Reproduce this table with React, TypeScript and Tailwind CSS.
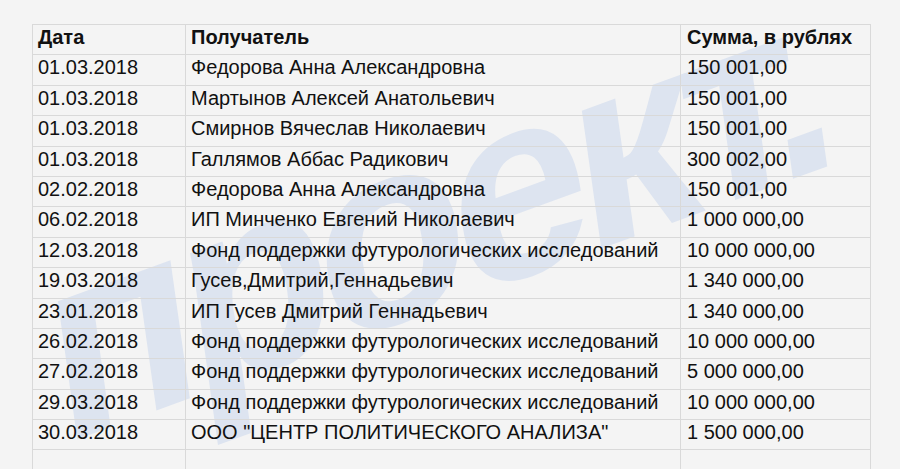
import React from "react";

const rows: [string, string, string][] = [
  ["01.03.2018", "Федорова Анна Александровна", "150 001,00"],
  ["01.03.2018", "Мартынов Алексей Анатольевич", "150 001,00"],
  ["01.03.2018", "Смирнов Вячеслав Николаевич", "150 001,00"],
  ["01.03.2018", "Галлямов Аббас Радикович", "300 002,00"],
  ["02.02.2018", "Федорова Анна Александровна", "150 001,00"],
  ["06.02.2018", "ИП Минченко Евгений Николаевич", "1 000 000,00"],
  ["12.03.2018", "Фонд поддержки футурологических исследований", "10 000 000,00"],
  ["19.03.2018", "Гусев,Дмитрий,Геннадьевич", "1 340 000,00"],
  ["23.01.2018", "ИП Гусев Дмитрий Геннадьевич", "1 340 000,00"],
  ["26.02.2018", "Фонд поддержки футурологических исследований", "10 000 000,00"],
  ["27.02.2018", "Фонд поддержки футурологических исследований", "5 000 000,00"],
  ["29.03.2018", "Фонд поддержки футурологических исследований", "10 000 000,00"],
  ["30.03.2018", 'ООО "ЦЕНТР ПОЛИТИЧЕСКОГО АНАЛИЗА"', "1 500 000,00"],
  ["", "", ""],
];

function Row({ cells, bold }: { cells: string[]; bold?: boolean }) {
  return (
    <div className="flex h-[30.4px] border-b border-[#d9d9d9]">
      <div className={`w-[153px] shrink-0 border-r border-[#d9d9d9] pl-[5px] pt-[1px] leading-[23px] whitespace-nowrap ${bold ? "font-bold" : ""}`}>
        {cells[0]}
      </div>
      <div className={`w-[495px] shrink-0 border-r border-[#d9d9d9] pl-[5px] pt-[1px] leading-[23px] whitespace-nowrap ${bold ? "font-bold" : ""}`}>
        {cells[1]}
      </div>
      <div className={`w-[189px] shrink-0 pl-[6px] pt-[1px] leading-[23px] whitespace-nowrap ${bold ? "font-bold" : ""}`}>
        {cells[2]}
      </div>
    </div>
  );
}

export default function App() {
  return (
    <div className="relative h-[469px] w-[900px] overflow-hidden bg-[#f4f4f4] pt-[24px] pl-[32px] text-[20px] text-[#111111] font-['Liberation_Sans',Arial,sans-serif]">
      <span
        className="pointer-events-none absolute left-[66px] top-[228px] origin-bottom-left -rotate-[20deg] -skew-x-[12deg] select-none whitespace-nowrap text-[258px] font-bold leading-none tracking-[-0.055em] text-[#dde4f0] font-['Liberation_Sans',Arial,sans-serif]"
        aria-hidden="true"
      >
        проект.
      </span>
      <div className="relative z-10 w-[839px] border-l border-t border-r border-[#d9d9d9]">
        <Row cells={["Дата", "Получатель", "Сумма, в рублях"]} bold />
        {rows.map((r, i) => (
          <Row key={i} cells={r} />
        ))}
      </div>
    </div>
  );
}
